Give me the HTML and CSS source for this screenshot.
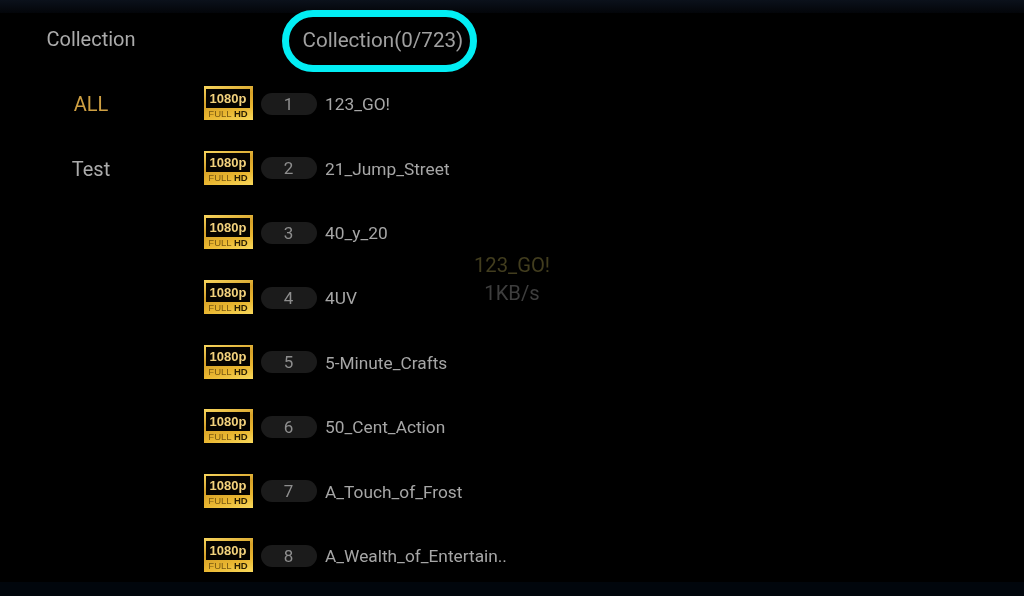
FILE: index.html
```html
<!DOCTYPE html>
<html lang="en">
<head>
<meta charset="utf-8">
<title>Collection</title>
<link rel="stylesheet" href="styles.css">
</head>
<body>
<div class="screen">
  <div class="strip-top"></div>
  <div class="body">
    <aside class="side">
      <div class="side-title">Collection</div>
      <div class="side-item active">ALL</div>
      <div class="side-item">Test</div>
    </aside>
    <main class="main">
      <div class="head"><div class="head-pill">Collection(0/723)</div></div>
      <ul class="list">
        <li class="row"><span class="hd"><span class="hd-top">1080p</span><span class="hd-bot">FULL <b>HD</b></span></span><span class="num">1</span><span class="name">123_GO!</span></li>
        <li class="row"><span class="hd"><span class="hd-top">1080p</span><span class="hd-bot">FULL <b>HD</b></span></span><span class="num">2</span><span class="name">21_Jump_Street</span></li>
        <li class="row"><span class="hd"><span class="hd-top">1080p</span><span class="hd-bot">FULL <b>HD</b></span></span><span class="num">3</span><span class="name">40_y_20</span></li>
        <li class="row"><span class="hd"><span class="hd-top">1080p</span><span class="hd-bot">FULL <b>HD</b></span></span><span class="num">4</span><span class="name">4UV</span></li>
        <li class="row"><span class="hd"><span class="hd-top">1080p</span><span class="hd-bot">FULL <b>HD</b></span></span><span class="num">5</span><span class="name">5-Minute_Crafts</span></li>
        <li class="row"><span class="hd"><span class="hd-top">1080p</span><span class="hd-bot">FULL <b>HD</b></span></span><span class="num">6</span><span class="name">50_Cent_Action</span></li>
        <li class="row"><span class="hd"><span class="hd-top">1080p</span><span class="hd-bot">FULL <b>HD</b></span></span><span class="num">7</span><span class="name">A_Touch_of_Frost</span></li>
        <li class="row"><span class="hd"><span class="hd-top">1080p</span><span class="hd-bot">FULL <b>HD</b></span></span><span class="num">8</span><span class="name">A_Wealth_of_Entertain..</span></li>
      </ul>
    </main>
  </div>
  <div class="strip-bottom"></div>
  <div class="loading">
    <div class="loading-name">123_GO!</div>
    <div class="loading-speed">1KB/s</div>
  </div>
</div>
</body>
</html>
```
FILE: styles.css
```css
html, body { margin: 0; padding: 0; background: #000; }
.screen {
  position: relative;
  width: 1024px;
  height: 596px;
  overflow: hidden;
  background: #000;
  display: flex;
  flex-direction: column;
  font-family: Roboto, "Liberation Sans", sans-serif;
  color: #a8a8a8;
  filter: blur(.35px);
}
.strip-top { height: 13px; flex: none; background: linear-gradient(#0b111b, #030509); }
.strip-bottom { height: 14px; flex: none; background: #01060c; }
.body { flex: 1; display: flex; min-height: 0; }
.side { width: 182px; flex: none; display: flex; flex-direction: column; align-items: center; }
.side-title { height: 52px; line-height: 53px; font-size: 20px; color: #ababab; }
.side-item { height: 64.6px; line-height: 78px; font-size: 20px; color: #ababab; }
.side-item.active { color: #cfa043; }
.main { flex: 1; min-width: 0; padding-left: 21.5px; }
.head { display: flex; align-items: flex-start; height: 59px; padding-left: 78px; }
.head-pill {
  box-sizing: border-box;
  display: flex;
  align-items: center;
  flex: none;
  width: 195px;
  height: 62px;
  margin-top: -3.5px;
  padding: 0 0 1px 14px;
  border: 7.5px solid #02eef4;
  border-radius: 31px;
  font-size: 20.6px;
  color: #a0a0a0;
  background: #000;
  white-space: nowrap;
}
.list { list-style: none; margin: 0; padding: 0; }
.row { display: flex; align-items: center; height: 64.6px; }
.hd {
  box-sizing: border-box;
  width: 49px;
  height: 34px;
  margin-bottom: 2px;
  flex: none;
  display: flex;
  flex-direction: column;
  padding: 2.5px 2.5px 0;
  background: linear-gradient(165deg, #f8d65f, #d6a128 40%, #e9b630 70%, #f9d95c);
  font-family: "Liberation Sans", sans-serif;
}
.hd-top {
  height: 19px;
  flex: none;
  background: #050300;
  color: #f3d27c;
  font-weight: 700;
  font-size: 13px;
  line-height: 19px;
  text-align: center;
  white-space: nowrap;
}
.hd-bot {
  flex: 1;
  font-size: 9.5px;
  line-height: 12px;
  text-align: center;
  color: #7a5a12;
  white-space: nowrap;
}
.hd-bot b { color: #2b1f03; }
.num {
  width: 56px;
  height: 22px;
  margin-left: 8px;
  margin-bottom: 1px;
  flex: none;
  border-radius: 11px;
  background: #1b1b1b;
  text-align: center;
  font-size: 17px;
  line-height: 22px;
  color: #8e8e8e;
}
.name { margin-left: 8.5px; font-size: 17.3px; color: #a6a6a6; white-space: nowrap; }
.loading { position: absolute; left: 412px; top: 251px; width: 200px; text-align: center; font-size: 20.2px; line-height: 28px; }
.loading-name { color: #423d1e; }
.loading-speed { color: #3e3e3e; }
```
